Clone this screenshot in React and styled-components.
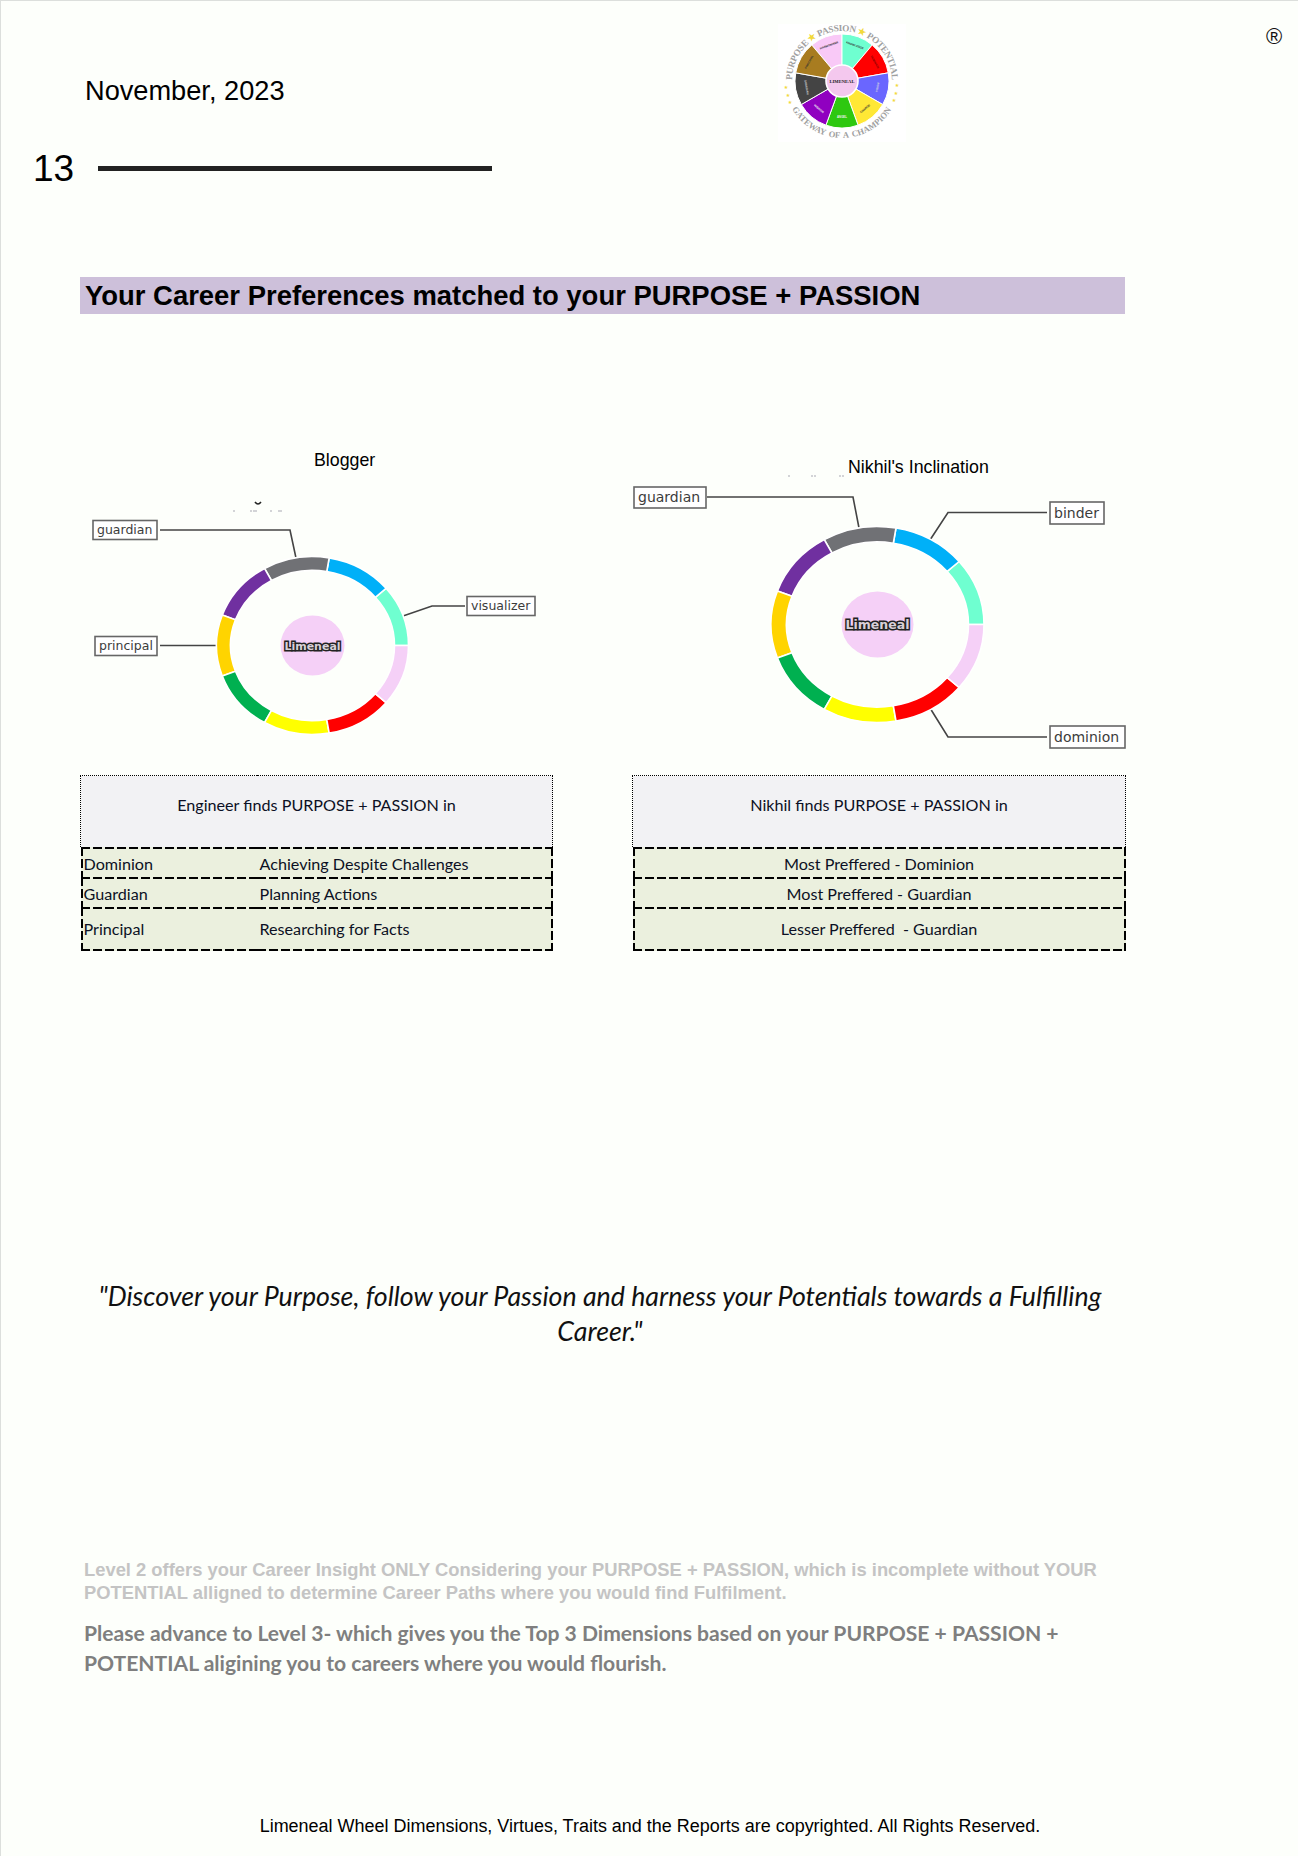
import styled, { createGlobalStyle } from "styled-components";

const GlobalStyle = createGlobalStyle`
  html, body { margin: 0; padding: 0; background: #fdfffb; }
  body { font-family: "Liberation Sans", Arial, sans-serif; color: #000; }
`;

const SEGMENTS = ["#6fffd0", "#00b0f8", "#707175", "#7030a0", "#ffd400", "#00b050", "#ffff00", "#ff0000", "#f5d0f7"];

const WHEEL = [
  { color: "#f9c9f7", label: "HARMONISER", ink: "#333" },
  { color: "#6fffd0", label: "KNOWLEDGE", ink: "#333" },
  { color: "#ff0000", label: "DOMINION", ink: "#700" },
  { color: "#6a66ff", label: "VISION", ink: "#ddd" },
  { color: "#ffe835", label: "CHARGE", ink: "#333" },
  { color: "#2ec810", label: "ANGEL", ink: "#eee" },
  { color: "#9000c0", label: "WISDOM", ink: "#eee" },
  { color: "#444444", label: "GUARDIAN", ink: "#ccc" },
  { color: "#a87c20", label: "PRINCIPAL", ink: "#333" },
];

const LEFT_CHART = {
  viewBox: "80 472 473 298",
  width: 473,
  height: 298,
  cx: 312.5,
  cy: 646.5,
  rx: 96,
  ry: 89,
  ring: 14,
  hubX: 32,
  hubY: 30,
  hubFont: 11,
  labelFont: 12.5,
  mark: "M255 503 Q258 507 261 503",
  specks: [[234, 512], [251, 512], [254, 512], [256, 512], [271, 512], [279, 512], [281, 512]],
  callouts: [
    { label: "guardian", x: 93, y: 521.5, w: 64, h: 19, line: "M160 531 H290 L296 559" },
    { label: "visualizer", x: 467, y: 597.5, w: 68, h: 19, line: "M465 607 H432 L403 617" },
    { label: "principal", x: 95, y: 637.5, w: 62, h: 19, line: "M160 646.5 H217" },
  ],
};

const RIGHT_CHART = {
  viewBox: "632 479 494 292",
  width: 494,
  height: 292,
  cx: 877.5,
  cy: 625.5,
  rx: 106.5,
  ry: 98,
  ring: 15.5,
  hubX: 36,
  hubY: 33,
  hubFont: 12.5,
  labelFont: 14,
  specks: [[789, 477], [812, 477], [815, 477], [840, 477], [843, 477]],
  callouts: [
    { label: "guardian", x: 634, y: 488, w: 72, h: 21, line: "M707 498 H853 L859 529" },
    { label: "binder", x: 1050, y: 503, w: 54, h: 22, line: "M1047 513.5 H948 L930 541" },
    { label: "dominion", x: 1050, y: 727, w: 75, h: 22, line: "M1047 738 H948 L930 709" },
  ],
};

const TABLES = [
  {
    title: "Engineer finds PURPOSE + PASSION in",
    rows: [
      { cells: ["Dominion", "Achieving Despite Challenges"], size: "short" },
      { cells: ["Guardian", "Planning Actions"], size: "short" },
      { cells: ["Principal", "Researching for Facts"], size: "tall" },
    ],
  },
  {
    title: "Nikhil finds PURPOSE + PASSION in",
    rows: [
      { cells: ["Most Preffered - Dominion"], size: "short" },
      { cells: ["Most Preffered - Guardian"], size: "short" },
      { cells: ["Lesser Preffered\u00a0 - Guardian"], size: "tall" },
    ],
  },
];

const Page = styled.div`
  box-sizing: border-box;
  width: 1298px;
  height: 1856px;
  padding-left: 79px;
  background: #fdfffb;
  border-top: 1px solid #dcdfdc;
  border-left: 1px solid #dcdfdc;
  overflow: hidden;
`;

const Header = styled.header`
  display: flex;
  align-items: flex-start;
  height: 276px;
`;

const HeaderLeft = styled.div`
  width: 745px;
  margin-left: -47px;
  flex: none;
`;

const DateText = styled.div`
  margin: 75px 0 0 52px;
  font-size: 27.2px;
  line-height: 30px;
`;

const NumberRow = styled.div`
  display: flex;
  align-items: center;
  margin-top: 42px;
`;

const PageNumber = styled.div`
  width: 65px;
  font-size: 37px;
  line-height: 42px;
`;

const Rule = styled.div`
  width: 394px;
  height: 5px;
  margin-top: -2px;
  background: #222;
`;

const Logo = styled.svg`
  flex: none;
  display: block;
  margin-top: 23px;
  background: #fff;
`;

const RegMark = styled.div`
  margin: 23px 0 0 360px;
  font-size: 22px;
  line-height: 26px;
  color: #111;
`;

const Banner = styled.h1`
  box-sizing: border-box;
  width: 1045px;
  height: 37px;
  margin: 0;
  padding-left: 5px;
  background: #cdc0da;
  font-size: 27.45px;
  font-weight: 700;
  line-height: 37px;
`;

const Columns = styled.div`
  display: grid;
  grid-template-columns: 473px 494px;
  column-gap: 79px;
`;

const ChartRow = styled(Columns)`
  margin-top: 126px;
`;

const TableRow = styled(Columns)`
  margin-top: 5px;
`;

const ChartTitle = styled.div`
  height: 22px;
  margin-top: ${(p) => p.$top}px;
  padding-left: ${(p) => p.$indent}px;
  font-size: 17.8px;
  line-height: 22px;
`;

const ChartSvg = styled.svg`
  display: block;
  overflow: visible;
`;

const CalloutLine = styled.path`
  fill: none;
  stroke: #444;
  stroke-width: 1.6;
`;

const CalloutBox = styled.rect`
  fill: #fff;
  stroke: #666;
  stroke-width: 1.6;
`;

const CalloutText = styled.text`
  font-family: "DejaVu Sans", sans-serif;
  fill: #3c3c3c;
`;

const HubText = styled.text`
  font-family: "DejaVu Sans", sans-serif;
  font-weight: 700;
  fill: #d8d0d8;
  stroke: #222;
  stroke-width: 3px;
  paint-order: stroke;
  text-anchor: middle;
`;

const Speck = styled.circle`
  fill: #889;
`;

const SpeckMark = styled.path`
  fill: none;
  stroke: #222;
  stroke-width: 1.5;
`;

const Table = styled.table`
  width: 100%;
  border-collapse: collapse;
  table-layout: fixed;
  font-family: Lato, "Open Sans", sans-serif;
  font-size: 16.15px;
  color: #0c1024;
`;

const NameColumn = styled.col`
  width: 176px;
`;

const TitleCell = styled.td`
  box-sizing: border-box;
  height: 71px;
  padding: 18px 0 0;
  vertical-align: top;
  text-align: center;
  line-height: 22px;
  background: #f2f2f4;
  border: 1px dotted #000;
  border-bottom: 0;
`;

// the print dashes are longer than a browser's dashed border, so they are painted
const H_DASH = "repeating-linear-gradient(90deg, #000 0 9px, transparent 9px 12px)";
const V_DASH = "repeating-linear-gradient(180deg, #000 0 9px, transparent 9px 12px)";

// rows share their top line with the row above, only the last one closes the table
const closing = (p) => (p.$size === "tall" ? 2 : 0);

const Cell = styled.td`
  box-sizing: border-box;
  height: ${(p) => (p.$size === "tall" ? 44 : 30)}px;
  padding: ${(p) => (p.$size === "tall" ? "0" : "4px 0 0")};
  padding-left: ${(p) => (p.$center ? 0 : 3)}px;
  text-align: ${(p) => (p.$center ? "center" : "left")};
  line-height: 20px;
  white-space: nowrap;
  background-color: #ebf0de;
  background-image: ${H_DASH}, ${H_DASH};
  background-size: 100% 2px, 100% ${closing}px;
  background-position: 0 0, 0 100%;
  background-repeat: no-repeat;
  &:first-child {
    background-image: ${H_DASH}, ${H_DASH}, ${V_DASH};
    background-size: 100% 2px, 100% ${closing}px, 2px 100%;
    background-position: 0 0, 0 100%, 0 0;
  }
  &:last-child {
    background-image: ${H_DASH}, ${H_DASH}, ${V_DASH};
    background-size: 100% 2px, 100% ${closing}px, 2px 100%;
    background-position: 0 0, 0 100%, 100% 0;
  }
  &:first-child:last-child {
    background-image: ${H_DASH}, ${H_DASH}, ${V_DASH}, ${V_DASH};
    background-size: 100% 2px, 100% ${closing}px, 2px 100%, 2px 100%;
    background-position: 0 0, 0 100%, 0 0, 100% 0;
  }
`;

const Quote = styled.p`
  width: 1040px;
  margin: 328px 0 0;
  font-family: Lato, "Open Sans", sans-serif;
  font-size: 26.75px;
  font-style: italic;
  line-height: 35px;
  text-align: center;
  color: #111;
`;

const Notes = styled.div`
  width: 1040px;
  margin: 209px 0 0 4px;
`;

const NoteLight = styled.p`
  margin: 0;
  font-size: 18.38px;
  font-weight: 700;
  line-height: 23px;
  color: #c4c4c4;
`;

const NoteStrong = styled.p`
  margin: 14px 0 0;
  font-family: Lato, "Open Sans", sans-serif;
  font-size: 21.1px;
  font-weight: 700;
  line-height: 30px;
  color: #7f7f7f;
`;

const Footer = styled.footer`
  width: 1140px;
  margin-top: 137px;
  font-size: 17.98px;
  line-height: 22px;
  text-align: center;
`;

// one ring piece between two angles, on an ellipse that is wider than high
const ringPath = (c, from, to) => {
  const pt = (rx, ry, a) => {
    const r = (a * Math.PI) / 180;
    return `${(c.cx + rx * Math.cos(r)).toFixed(2)} ${(c.cy - ry * Math.sin(r)).toFixed(2)}`;
  };
  const ix = c.rx - c.ring;
  const iy = c.ry - c.ring;
  return `M${pt(c.rx, c.ry, from)} A${c.rx} ${c.ry} 0 0 0 ${pt(c.rx, c.ry, to)} L${pt(ix, iy, to)} A${ix} ${iy} 0 0 1 ${pt(ix, iy, from)} Z`;
};

const DonutChart = ({ chart }) => (
  <ChartSvg viewBox={chart.viewBox} width={chart.width} height={chart.height}>
    {chart.mark && <SpeckMark d={chart.mark} />}
    {chart.specks.map(([x, y], i) => (
      <Speck key={i} cx={x} cy={y} r="0.7" />
    ))}
    {chart.callouts.map((c) => (
      <CalloutLine key={c.label} d={c.line} />
    ))}
    {SEGMENTS.map((color, i) => (
      <path key={color} d={ringPath(chart, i * 40, (i + 1) * 40)} fill={color} stroke="#fff" strokeWidth="1.6" />
    ))}
    <ellipse cx={chart.cx} cy={chart.cy} rx={chart.hubX} ry={chart.hubY} fill="#f5d0f7" />
    <HubText x={chart.cx} y={chart.cy + chart.hubFont * 0.38} fontSize={chart.hubFont}>
      Limeneal
    </HubText>
    {chart.callouts.map((c) => (
      <g key={c.label}>
        <CalloutBox x={c.x} y={c.y} width={c.w} height={c.h} />
        <CalloutText x={c.x + 4} y={c.y + c.h / 2 + chart.labelFont * 0.33} fontSize={chart.labelFont}>
          {c.label}
        </CalloutText>
      </g>
    ))}
  </ChartSvg>
);

const polar = (r, deg) => {
  const a = ((deg - 90) * Math.PI) / 180;
  return [(64 + r * Math.cos(a)).toFixed(2), (57 + r * Math.sin(a)).toFixed(2)];
};

const wedge = (from, to) => {
  const [x1, y1] = polar(47, from);
  const [x2, y2] = polar(47, to);
  return `M64 57 L${x1} ${y1} A47 47 0 0 1 ${x2} ${y2} Z`;
};

const LimenealLogo = () => (
  <Logo width="128" height="118" viewBox="0 0 128 118">
    <defs>
      <path id="logoTop" d="M14 57 A50 50 0 0 1 114 57" fill="none" />
      <path id="logoBottom" d="M13.7 83.8 A57 57 0 0 0 114.3 83.8" fill="none" />
    </defs>
    {WHEEL.map((seg, i) => {
      const from = -40 + i * 40;
      const mid = from + 20;
      const flip = mid > 90 && mid < 270;
      const [tx, ty] = polar(37, mid);
      return (
        <g key={seg.label}>
          <path d={wedge(from, from + 40)} fill={seg.color} stroke="#fff" strokeWidth="1" />
          <text
            x={tx}
            y={ty}
            fontSize="2.8"
            fontFamily="Liberation Sans, sans-serif"
            fontWeight="700"
            textAnchor="middle"
            fill={seg.ink}
            transform={`rotate(${flip ? mid + 180 : mid} ${tx} ${ty})`}
          >
            {seg.label}
          </text>
        </g>
      );
    })}
    <circle cx="64" cy="57" r="16" fill="#f4c8ee" stroke="#fff" strokeWidth="1.6" />
    <text x="64" y="58.5" fontSize="4.6" fontFamily="Liberation Serif, serif" fontWeight="700" textAnchor="middle" fill="#222">
      LIMENEAL
    </text>
    <text fontSize="9.2" fontWeight="700" fontFamily="Liberation Serif, serif" fill="#a0a0a0">
      <textPath href="#logoTop" textLength="155" lengthAdjust="spacing" startOffset="1">
        PURPOSE <tspan fill="#f2d93a">★</tspan> PASSION <tspan fill="#f2d93a">★</tspan> POTENTIAL
      </textPath>
    </text>
    <text fontSize="8.6" fontWeight="700" wordSpacing="1.5" fontFamily="Liberation Serif, serif" fill="#a0a0a0">
      <textPath href="#logoBottom" textLength="120" lengthAdjust="spacing" startOffset="1">
        GATEWAY OF A CHAMPION
      </textPath>
    </text>
    {[[8, 65], [10, 73], [12, 80], [119, 63], [118, 71], [116, 78]].map(([x, y]) => (
      <text key={`${x}-${y}`} x={x} y={y} fontSize="5" textAnchor="middle" fill="#f2d93a" fontFamily="DejaVu Sans, sans-serif">
        ★
      </text>
    ))}
  </Logo>
);

const App = () => (
  <>
    <GlobalStyle />
    <Page>
      <Header>
        <HeaderLeft>
          <DateText>November, 2023</DateText>
          <NumberRow>
            <PageNumber>13</PageNumber>
            <Rule />
          </NumberRow>
        </HeaderLeft>
        <LimenealLogo />
        <RegMark>®</RegMark>
      </Header>

      <Banner>Your Career Preferences matched to your PURPOSE + PASSION</Banner>

      <ChartRow>
        <div>
          <ChartTitle $top={9} $indent={234}>Blogger</ChartTitle>
          <DonutChart chart={LEFT_CHART} />
        </div>
        <div>
          <ChartTitle $top={16} $indent={216}>Nikhil's Inclination</ChartTitle>
          <DonutChart chart={RIGHT_CHART} />
        </div>
      </ChartRow>

      <TableRow>
        {TABLES.map((t) => (
          <Table key={t.title}>
            <colgroup>
              <NameColumn />
              <col />
            </colgroup>
            <tbody>
              <tr>
                <TitleCell colSpan={2}>{t.title}</TitleCell>
              </tr>
              {t.rows.map((row) => (
                <tr key={row.cells[0]}>
                  {row.cells.length === 1 ? (
                    <Cell colSpan={2} $center $size={row.size}>{row.cells[0]}</Cell>
                  ) : (
                    row.cells.map((c) => (
                      <Cell key={c} $size={row.size}>{c}</Cell>
                    ))
                  )}
                </tr>
              ))}
            </tbody>
          </Table>
        ))}
      </TableRow>

      <Quote>
        "Discover your Purpose, follow your Passion and harness your Potentials towards a Fulfilling Career."
      </Quote>

      <Notes>
        <NoteLight>
          Level 2 offers your Career Insight ONLY Considering your PURPOSE + PASSION, which is incomplete without YOUR POTENTIAL alligned to determine Career Paths where you would find Fulfilment.
        </NoteLight>
        <NoteStrong>
          Please advance to Level 3- which gives you the Top 3 Dimensions based on your PURPOSE + PASSION + POTENTIAL aligining you to careers where you would flourish.
        </NoteStrong>
      </Notes>

      <Footer>Limeneal Wheel Dimensions, Virtues, Traits and the Reports are copyrighted. All Rights Reserved.</Footer>
    </Page>
  </>
);

export default App;
